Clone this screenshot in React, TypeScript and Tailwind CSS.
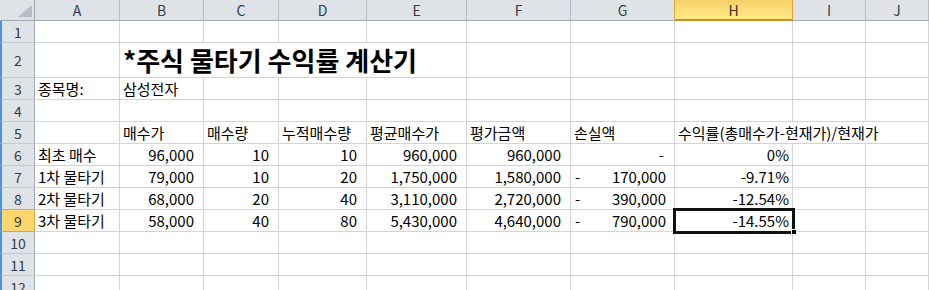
import clsx from "clsx";

type Cell = {
  v?: string;
  right?: boolean;
  noR?: boolean;
  pr?: string;
  dash?: boolean;
  title?: boolean;
  sel?: boolean;
};

const COLS = ["A", "B", "C", "D", "E", "F", "G", "H", "I", "J"];

const r = (v: string, pr = "pr-[9px]"): Cell => ({ v, right: true, pr });
const l = (v?: string): Cell => ({ v });
const loss = (v: string): Cell => ({ v, right: true, dash: true, pr: "pr-[8px]" });

const ROWS: Cell[][] = [
  [l(), l(), l(), l(), l(), l(), l(), l(), l(), l()],
  [l(), { v: "*주식 물타기 수익률 계산기", title: true, noR: true }, { noR: true }, { noR: true }, l(), l(), l(), l(), l(), l()],
  [l("종목명:"), l("삼성전자"), l(), l(), l(), l(), l(), l(), l(), l()],
  [l(), l(), l(), l(), l(), l(), l(), l(), l(), l()],
  [
    l(),
    l("매수가"),
    l("매수량"),
    l("누적매수량"),
    l("평균매수가"),
    l("평가금액"),
    l("손실액"),
    { v: "수익률(총매수가-현재가)/현재가", noR: true },
    { noR: true },
    l(),
  ],
  [l("최초 매수"), r("96,000"), r("10"), r("10"), r("960,000"), r("960,000"), r("-", "pr-[10px]"), r("0%", "pr-[3px]"), l(), l()],
  [l("1차 물타기"), r("79,000"), r("10"), r("20"), r("1,750,000"), r("1,580,000"), loss("170,000"), r("-9.71%", "pr-[3px]"), l(), l()],
  [l("2차 물타기"), r("68,000"), r("20"), r("40"), r("3,110,000"), r("2,720,000"), loss("390,000"), r("-12.54%", "pr-[3px]"), l(), l()],
  [l("3차 물타기"), r("58,000"), r("40"), r("80"), r("5,430,000"), r("4,640,000"), loss("790,000"), { ...r("-14.55%", "pr-[3px]"), sel: true }, l(), l()],
  [l(), l(), l(), l(), l(), l(), l(), l(), l(), l()],
  [l(), l(), l(), l(), l(), l(), l(), l(), l(), l()],
  [l(), l(), l(), l(), l(), l(), l(), l(), l(), l()],
];

function DataCell({ c }: { c: Cell }) {
  return (
    <div
      className={clsx(
        "relative flex items-end whitespace-nowrap border-b border-[#d4d4d4] text-black",
        !c.noR && "border-r",
        c.title ? "pb-[1px] pl-[3px] text-[26px] font-bold leading-[32px]" : "text-[15px] leading-[21px]",
        c.right ? clsx("justify-end", c.pr) : !c.title && "pl-[3px]"
      )}
    >
      {c.dash && <span className="absolute bottom-0 left-[4px]">-</span>}
      {c.v && <span>{c.v}</span>}
      {c.sel && (
        <>
          {/* selection frame + fill handle */}
          <div className="pointer-events-none absolute -bottom-[3px] -left-[2px] -right-[3px] -top-[2px] z-10 border-[3px] border-[#111]" />
          <div className="absolute -bottom-[3px] -right-[4px] z-20 h-[5px] w-[5px] border-l border-t border-white bg-black" />
        </>
      )}
    </div>
  );
}

export default function App() {
  return (
    <div className="h-[290px] w-[929px] overflow-hidden bg-white font-['Noto_Sans_CJK_KR','Noto_Sans',sans-serif]">
      <div className="grid grid-cols-[35px_85px_84px_75px_88px_100px_104px_104px_118px_73px_1fr] grid-rows-[21px_22px_35px_22px_22px_22px_22px_22px_22px_22px_22px_22px_22px]">
        {/* corner */}
        <div className="flex items-end justify-end border-b border-r border-[#9eaab8] bg-[#dfe3e8] pb-[3px] pr-[2px]">
          <svg width="14" height="12" viewBox="0 0 14 12">
            <polygon points="0,12 14,12 14,0" fill="#b6bcc4" />
          </svg>
        </div>
        {COLS.map((k) => (
          <div
            key={k}
            className={clsx(
              "flex items-center justify-center text-[14px] leading-none",
              k === "H"
                ? "border-b-2 border-r border-b-[#c98e30] border-r-[#e2a53a] bg-gradient-to-b from-[#f9d06a] to-[#ffeb86] text-[#3b3325]"
                : clsx(
                    "border-b border-r border-b-[#9eaab8] bg-[#dfe3e8] text-[#333c4a]",
                    k === "G" ? "border-r-[#e2a53a]" : "border-r-[#b4bcc6]"
                  )
            )}
          >
            {k}
          </div>
        ))}
        {ROWS.map((row, i) => {
          const n = i + 1;
          return [
            <div
              key={`h${n}`}
              className={clsx(
                "flex items-center justify-center border-b border-l-2 border-r border-l-[#4b92da] text-[14px] leading-none",
                n === 9
                  ? "border-b-[#e2a53a] border-r-[#e2a53a] bg-[#fcd66e] text-[#3b3325]"
                  : clsx(
                      "border-r-[#9eaab8] bg-[#dfe3e8] text-[#333c4a]",
                      n === 8 ? "border-b-[#e2a53a]" : "border-b-[#c3cad2]"
                    )
              )}
            >
              {n}
            </div>,
            ...row.map((c, j) => <DataCell key={`${n}-${j}`} c={c} />),
          ];
        })}
      </div>
    </div>
  );
}
